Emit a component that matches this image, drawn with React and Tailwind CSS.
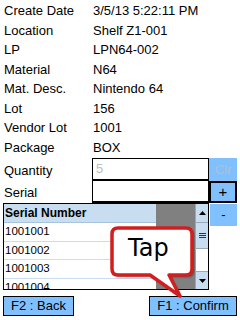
import React from 'react';

const info = [
  ['Create Date', '3/5/13 5:22:11 PM'],
  ['Location', 'Shelf Z1-001'],
  ['LP', 'LPN64-002'],
  ['Material', 'N64'],
  ['Mat. Desc.', 'Nintendo 64'],
  ['Lot', '156'],
  ['Vendor Lot', '1001'],
  ['Package', 'BOX'],
];

const serials = ['1001001', '1001002', '1001003', '1001004'];

function Callout() {
  return (
    <div className="absolute left-[105px] top-[222px] w-[95px] h-[80px]">
      <svg width="95" height="80" viewBox="0 0 95 80" className="absolute inset-0">
        <defs>
          <filter id="sh" x="-20%" y="-20%" width="140%" height="140%">
            <feGaussianBlur stdDeviation="1" />
          </filter>
        </defs>
        <path
          d="M13 6H81Q87 6 87 12V47Q87 53 81 53H64L75 74L45 53H13Q7 53 7 47V12Q7 6 13 6Z"
          fill="rgba(0,0,0,0.45)"
          transform="translate(2 2)"
          filter="url(#sh)"
        />
        <path
          d="M13 6H81Q87 6 87 12V47Q87 53 81 53H64L75 74L45 53H13Q7 53 7 47V12Q7 6 13 6Z"
          fill="#ffffff"
          stroke="#d11f1f"
          strokeWidth="3.5"
          strokeLinejoin="round"
        />
      </svg>
      <span className="absolute left-[23px] top-[12px] text-[24px] leading-[28px] text-black font-['DejaVu_Sans',sans-serif]">
        Tap
      </span>
    </div>
  );
}

export default function App() {
  return (
    <div className="relative w-[240px] h-[320px] overflow-hidden bg-white text-black text-[13px] font-['Liberation_Sans',Arial,sans-serif]">
      {/* Info rows */}
      <div className="pt-[1px]">
        {info.map(([label, value]) => (
          <div key={label} className="flex items-center h-[19.5px]">
            <span className="w-[93px] pl-[4px]">{label}</span>
            <span>{value}</span>
          </div>
        ))}
      </div>

      {/* Quantity */}
      <div className="flex mt-[1px] h-[23px]">
        <span className="w-[92px] pl-[4px] self-center pt-[2px]">Quantity</span>
        <div className="w-[117px] border border-black border-b-2 flex items-center pl-[3px] text-[#c0c0c0]">5</div>
        <div className="w-[28px] bg-[#80c0ff] flex items-center justify-center text-[#b2bfcc]">Clr</div>
      </div>

      {/* Serial */}
      <div className="flex h-[22px]">
        <span className="w-[92px] pl-[4px] self-center pt-[1px]">Serial</span>
        <div className="w-[117px] border-x border-black border-b-2"></div>
        <div className="w-[28px] border-2 border-black bg-[#80c0ff] flex items-center justify-center text-[15px]">+</div>
      </div>

      {/* Table + minus */}
      <div className="flex">
        <div className="ml-[3px] w-[206px] h-[87px] border border-black flex overflow-hidden">
          <div className="w-[152px] flex flex-col">
            <div className="h-[19px] bg-[#c9ddf0] border-b border-[#a9c3dc] pl-[1px] flex items-center font-bold text-[12px]">
              Serial Number
            </div>
            {serials.map((s) => (
              <div key={s} className="h-[18.5px] shrink-0 border-b border-[#c9ddf0] pl-[1px] flex items-center text-[11.5px]">
                {s}
              </div>
            ))}
          </div>
          <div className="w-[39px] bg-[#808080]"></div>
          <div className="w-[13px] border-l border-[#9aa9b8] flex flex-col">
            <div className="h-[19px] bg-[#c9ddf0] border-b border-[#9aa9b8] flex items-center justify-center">
              <svg width="7" height="4" viewBox="0 0 7 4"><path d="M0 4L3.5 0L7 4Z" fill="#000" /></svg>
            </div>
            <div className="h-[26px] bg-[#c9ddf0] border-b border-[#9aa9b8] flex items-center justify-center">
              <svg width="7" height="5" viewBox="0 0 7 5"><path d="M0 0.5H7M0 2.5H7M0 4.5H7" stroke="#333" strokeWidth="1" /></svg>
            </div>
            <div className="flex-1 bg-white"></div>
            <div className="h-[18px] bg-[#c9ddf0] border-t border-[#9aa9b8] flex items-center justify-center">
              <svg width="7" height="4" viewBox="0 0 7 4"><path d="M0 0L3.5 4L7 0Z" fill="#000" /></svg>
            </div>
          </div>
        </div>
        <div className="ml-[1px] mt-[1px] w-[27px] h-[22px] bg-[#80c0ff] flex items-center justify-center">-</div>
      </div>

      {/* Bottom buttons */}
      <div className="flex justify-between px-[3px] mt-[6px]">
        <button className="w-[71px] h-[20px] border border-black bg-[#80c0ff] flex items-center justify-center">F2 : Back</button>
        <button className="w-[88px] h-[20px] border border-black bg-[#80c0ff] flex items-center justify-center">F1 : Confirm</button>
      </div>

      <Callout />
    </div>
  );
}
